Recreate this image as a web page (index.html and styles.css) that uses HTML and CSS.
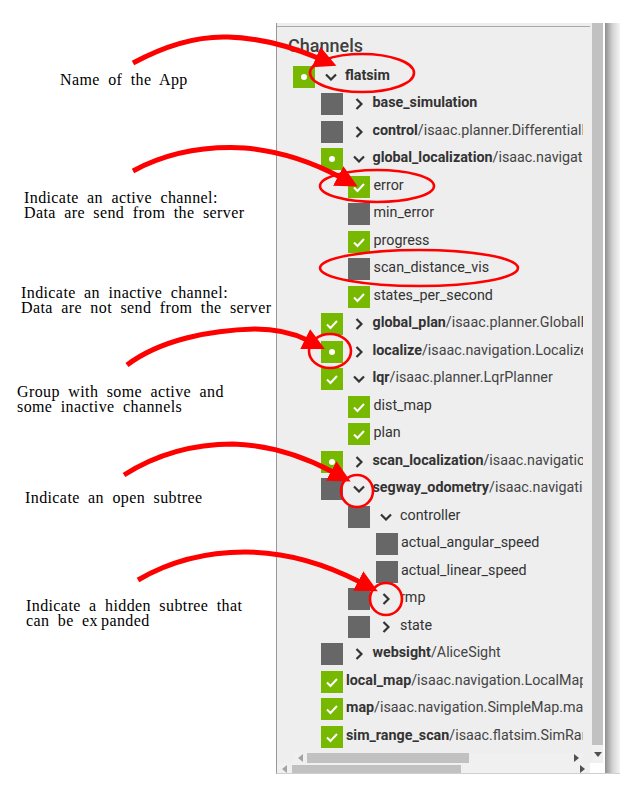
FILE: index.html
```html
<!DOCTYPE html>
<html>
<head>
<meta charset="utf-8">
<link rel="stylesheet" href="styles.css">
</head>
<body>
<div class="page">
  <div class="notes">
    <p class="note n1">Name of the App</p>
    <p class="note n2">Indicate an active channel:<br>Data are send from the server</p>
    <p class="note n3">Indicate an inactive channel:<br>Data are not send from the server</p>
    <p class="note n4">Group with some active and<br>some inactive channels</p>
    <p class="note n5">Indicate an open subtree</p>
    <p class="note n6">Indicate a hidden subtree that<br>can be ex<span class="kern">panded</span></p>
  </div>

  <div class="window">
    <div class="win-main">
      <div class="win-top">
        <div class="content">
          <div class="rule"></div>
          <div class="title">Channels</div>
          <div class="tree">
            <div class="row l0"><span class="cb on"><span class="dot"></span></span><span class="chev"><svg width="12" height="8" viewBox="0 0 12 8"><path d="M1 1.5L6 6.5L11 1.5"/></svg></span><span class="name"><b>flatsim</b></span></div>
            <div class="row l1"><span class="cb off"></span><span class="chev"><svg width="8" height="12" viewBox="0 0 8 12"><path d="M1.5 1L6.5 6L1.5 11"/></svg></span><span class="name"><b>base_simulation</b></span></div>
            <div class="row l1"><span class="cb off"></span><span class="chev"><svg width="8" height="12" viewBox="0 0 8 12"><path d="M1.5 1L6.5 6L1.5 11"/></svg></span><span class="name"><b>control</b>/isaac.planner.DifferentialBaseControl</span></div>
            <div class="row l1"><span class="cb on"><span class="dot"></span></span><span class="chev"><svg width="12" height="8" viewBox="0 0 12 8"><path d="M1 1.5L6 6.5L11 1.5"/></svg></span><span class="name"><b>global_localization</b>/isaac.navigation.GlobalLocalization</span></div>
            <div class="row l2"><span class="cb on"><svg width="22" height="22" viewBox="0 0 22 22"><path d="M6 11.5L9.5 15L16 8"/></svg></span><span class="name plain">error</span></div>
            <div class="row l2"><span class="cb off"></span><span class="name plain">min_error</span></div>
            <div class="row l2"><span class="cb on"><svg width="22" height="22" viewBox="0 0 22 22"><path d="M6 11.5L9.5 15L16 8"/></svg></span><span class="name plain">progress</span></div>
            <div class="row l2"><span class="cb off"></span><span class="name plain">scan_distance_vis</span></div>
            <div class="row l2"><span class="cb on"><svg width="22" height="22" viewBox="0 0 22 22"><path d="M6 11.5L9.5 15L16 8"/></svg></span><span class="name plain">states_per_second</span></div>
            <div class="row l1"><span class="cb on"><svg width="22" height="22" viewBox="0 0 22 22"><path d="M6 11.5L9.5 15L16 8"/></svg></span><span class="chev"><svg width="8" height="12" viewBox="0 0 8 12"><path d="M1.5 1L6.5 6L1.5 11"/></svg></span><span class="name"><b>global_plan</b>/isaac.planner.GlobalPlanner</span></div>
            <div class="row l1"><span class="cb on"><span class="dot"></span></span><span class="chev"><svg width="8" height="12" viewBox="0 0 8 12"><path d="M1.5 1L6.5 6L1.5 11"/></svg></span><span class="name"><b>localize</b>/isaac.navigation.LocalizeBehavior</span></div>
            <div class="row l1"><span class="cb on"><svg width="22" height="22" viewBox="0 0 22 22"><path d="M6 11.5L9.5 15L16 8"/></svg></span><span class="chev"><svg width="12" height="8" viewBox="0 0 12 8"><path d="M1 1.5L6 6.5L11 1.5"/></svg></span><span class="name"><b>lqr</b>/isaac.planner.LqrPlanner</span></div>
            <div class="row l2"><span class="cb on"><svg width="22" height="22" viewBox="0 0 22 22"><path d="M6 11.5L9.5 15L16 8"/></svg></span><span class="name plain">dist_map</span></div>
            <div class="row l2"><span class="cb on"><svg width="22" height="22" viewBox="0 0 22 22"><path d="M6 11.5L9.5 15L16 8"/></svg></span><span class="name plain">plan</span></div>
            <div class="row l1"><span class="cb on"><span class="dot"></span></span><span class="chev"><svg width="8" height="12" viewBox="0 0 8 12"><path d="M1.5 1L6.5 6L1.5 11"/></svg></span><span class="name"><b>scan_localization</b>/isaac.navigation.ScanLocalization</span></div>
            <div class="row l1"><span class="cb off"></span><span class="chev"><svg width="12" height="8" viewBox="0 0 12 8"><path d="M1 1.5L6 6.5L11 1.5"/></svg></span><span class="name"><b>segway_odometry</b>/isaac.navigation.DifferentialBaseOdometry</span></div>
            <div class="row l2"><span class="cb off"></span><span class="chev"><svg width="12" height="8" viewBox="0 0 12 8"><path d="M1 1.5L6 6.5L11 1.5"/></svg></span><span class="name plain">controller</span></div>
            <div class="row l3"><span class="cb off"></span><span class="name plain">actual_angular_speed</span></div>
            <div class="row l3"><span class="cb off"></span><span class="name plain">actual_linear_speed</span></div>
            <div class="row l2"><span class="cb off"></span><span class="chev"><svg width="8" height="12" viewBox="0 0 8 12"><path d="M1.5 1L6.5 6L1.5 11"/></svg></span><span class="name plain">rmp</span></div>
            <div class="row l2"><span class="cb off"></span><span class="chev"><svg width="8" height="12" viewBox="0 0 8 12"><path d="M1.5 1L6.5 6L1.5 11"/></svg></span><span class="name plain">state</span></div>
            <div class="row l1"><span class="cb off"></span><span class="chev"><svg width="8" height="12" viewBox="0 0 8 12"><path d="M1.5 1L6.5 6L1.5 11"/></svg></span><span class="name"><b>websight</b>/AliceSight</span></div>
            <div class="row l1"><span class="cb on"><svg width="22" height="22" viewBox="0 0 22 22"><path d="M6 11.5L9.5 15L16 8"/></svg></span><span class="name"><b>local_map</b>/isaac.navigation.LocalMap</span></div>
            <div class="row l1"><span class="cb on"><svg width="22" height="22" viewBox="0 0 22 22"><path d="M6 11.5L9.5 15L16 8"/></svg></span><span class="name"><b>map</b>/isaac.navigation.SimpleMap.map</span></div>
            <div class="row l1"><span class="cb on"><svg width="22" height="22" viewBox="0 0 22 22"><path d="M6 11.5L9.5 15L16 8"/></svg></span><span class="name"><b>sim_range_scan</b>/isaac.flatsim.SimRangeScan</span></div>
          </div>
          <div class="hscroll inner">
            <span class="harrow"><svg width="5" height="8" viewBox="0 0 5 8"><path class="dim" d="M5 0L0 4L5 8z"/></svg></span>
            <span class="thumb"></span>
            <span class="harrow end"><svg width="5" height="8" viewBox="0 0 5 8"><path d="M0 0L5 4L0 8z"/></svg></span>
          </div>
        </div>
        <div class="vscroll">
          <div class="vthumb"></div>
          <div class="varrow"><svg width="8" height="5" viewBox="0 0 8 5"><path d="M0 0L8 0L4 5z"/></svg></div>
        </div>
      </div>
      <div class="hscroll outer">
        <div class="otrack">
          <span class="harrow"><svg width="5" height="8" viewBox="0 0 5 8"><path class="dim" d="M5 0L0 4L5 8z"/></svg></span>
          <span class="thumb"></span>
          <span class="harrow end"><svg width="5" height="8" viewBox="0 0 5 8"><path d="M0 0L5 4L0 8z"/></svg></span>
        </div>
        <div class="corner"></div>
      </div>
    </div>
    <div class="shadow"></div>
  </div>

  <svg class="marks" width="640" height="800" viewBox="0 0 640 800">
    <defs>
      <marker id="head" markerUnits="userSpaceOnUse" markerWidth="24" markerHeight="22" refX="2" refY="11" orient="auto">
        <path d="M0 0L22 11L0 22z" fill="#ff0000"/>
      </marker>
    </defs>
    <g class="arrows">
      <path d="M133 63C168 44 198 36 228 37C262 38 292 47 318 58" marker-end="url(#head)"/>
      <path d="M133 171C168 152 208 146 245 148C280 151 312 162 340 177" marker-end="url(#head)"/>
      <path d="M127 365C160 340 210 330 255 329C278 329 293 333 307 340" marker-end="url(#head)"/>
      <path d="M124 475C160 452 198 444 233 444C270 445 305 457 333 472" marker-end="url(#head)"/>
      <path d="M138 580C172 560 208 552 245 552C286 552 325 564 360 582" marker-end="url(#head)"/>
    </g>
    <g class="rings">
      <ellipse cx="362" cy="73" rx="52" ry="19"/>
      <ellipse cx="377" cy="186" rx="57" ry="16"/>
      <ellipse cx="419" cy="268" rx="99" ry="18"/>
      <ellipse cx="330" cy="351" rx="21" ry="17"/>
      <ellipse cx="357" cy="491" rx="16" ry="16"/>
      <ellipse cx="386" cy="599" rx="16" ry="16"/>
    </g>
  </svg>
</div>
</body>
</html>
```

FILE: styles.css
```css
body {
  margin: 0;
  background: #ffffff;
}

.page {
  position: relative;
  width: 640px;
  height: 800px;
  display: flex;
  overflow: hidden;
}

/* ---------- annotations ---------- */
.notes {
  width: 276px;
  flex: none;
  display: flex;
  flex-direction: column;
  font-family: "Liberation Serif", serif;
  font-size: 16px;
  line-height: 15px;
  letter-spacing: 0.4px;
  word-spacing: 4px;
  color: #000000;
}

.note {
  margin: 0;
  white-space: nowrap;
}

.kern { margin-left: 3px; }

.n1 { margin-top: 72px; margin-left: 60px; }
.n2 { margin-top: 103px; margin-left: 24px; }
.n3 { margin-top: 65px; margin-left: 21px; }
.n4 { margin-top: 69px; margin-left: 17px; }
.n5 { margin-top: 76px; margin-left: 25px; }
.n6 { margin-top: 93px; margin-left: 26px; }

/* ---------- window ---------- */
.window {
  margin-top: 23px;
  width: 343px;
  height: 750px;
  flex: none;
  display: flex;
  border-left: 1px solid #999999;
  border-bottom: 1px solid #cfcfcf;
}

.win-main {
  width: 326px;
  display: flex;
  flex-direction: column;
}

.win-top {
  height: 740px;
  display: flex;
}

.content {
  width: 315px;
  background: #eeeeee;
  display: flex;
  flex-direction: column;
  padding-top: 3px;
  box-sizing: border-box;
}

.rule {
  height: 1px;
  background: #a9a9a9;
  margin-right: 2px;
}

.title {
  margin: 8px 0 6px 11px;
  font-family: Roboto, "Noto Sans", sans-serif;
  font-weight: 500;
  font-size: 18px;
  line-height: 22px;
  color: #404040;
}

.tree {
  margin-left: 16px;
  width: 290px;
  overflow: hidden;
  font-family: Roboto, "Noto Sans", sans-serif;
  font-size: 14.3px;
  color: #333333;
}

.row {
  height: 27.5px;
  display: flex;
  align-items: center;
  white-space: nowrap;
}

.l0 { padding-left: 0; }
.l1 { padding-left: 27.5px; }
.l2 { padding-left: 55px; }
.l3 { padding-left: 82.5px; }

.cb {
  width: 22px;
  height: 22px;
  flex: none;
  display: flex;
  align-items: center;
  justify-content: center;
}

.cb.on { background: #76b900; }
.cb.off { background: #676767; }

.cb svg path {
  fill: none;
  stroke: #ffffff;
  stroke-width: 2;
}

.dot {
  width: 6px;
  height: 6px;
  border-radius: 50%;
  background: #ffffff;
}

.chev {
  width: 20px;
  margin: 0 4px 0 6px;
  flex: none;
  display: flex;
  align-items: center;
  justify-content: center;
}

.chev svg path {
  fill: none;
  stroke: #333333;
  stroke-width: 2.2;
}

.name {
  color: #444444;
  padding-bottom: 4px;
}

.name b {
  font-weight: 700;
  color: #333333;
}

.row > .cb + .name {
  margin-left: 3.5px;
}

.name.plain {
  color: #333333;
}

/* ---------- scrollbars ---------- */
.hscroll.inner {
  margin: 2.5px 0 0 16px;
  width: 290px;
  height: 10px;
  display: flex;
  align-items: center;
  background: #f0f0f0;
}

.harrow {
  width: 14px;
  flex: none;
  display: flex;
  align-items: center;
  justify-content: center;
}

.harrow.end {
  margin-left: auto;
}

.harrow svg path { fill: #505050; }
.harrow svg path.dim { fill: #a3a3a3; }

.hscroll.inner .thumb {
  width: 162px;
  height: 10px;
  background: #c1c1c1;
}

.vscroll {
  width: 11px;
  display: flex;
  flex-direction: column;
  background: #f0f0f0;
}

.vthumb {
  height: 722px;
  background: #c1c1c1;
}

.varrow {
  height: 18px;
  display: flex;
  align-items: center;
  justify-content: center;
}

.varrow svg path { fill: #505050; }

.hscroll.outer {
  height: 10px;
  display: flex;
}

.otrack {
  width: 313px;
  display: flex;
  align-items: flex-end;
  background: #f0f0f0;
}

.otrack .harrow {
  width: 15px;
  height: 8px;
}

.otrack .thumb {
  width: 169px;
  height: 8px;
  background: #c1c1c1;
}

.corner {
  width: 13px;
  background: #ffffff;
}

.shadow {
  width: 17px;
  background: linear-gradient(to right, #ffffff 0, #ffffff 2px, #8e8e8e 2px, #d6d6d6 10px, #f4f4f4 17px);
}

/* ---------- red annotation marks ---------- */
.marks {
  position: absolute;
  left: 0;
  top: 0;
  pointer-events: none;
}

.arrows path {
  fill: none;
  stroke: #ff0000;
  stroke-width: 5;
}

.rings ellipse {
  fill: none;
  stroke: #ff0000;
  stroke-width: 2.6;
}
```
